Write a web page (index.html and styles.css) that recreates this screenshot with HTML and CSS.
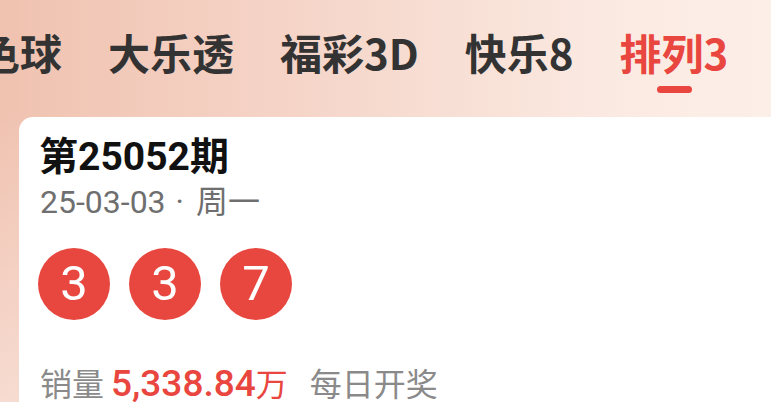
FILE: index.html
```html
<!DOCTYPE html>
<html lang="zh">
<head>
<meta charset="utf-8">
<link rel="stylesheet" href="styles.css">
</head>
<body>
<div class="page">
  <nav class="tabs">
    <div class="tab">双色球</div>
    <div class="tab">大乐透</div>
    <div class="tab">福彩3D</div>
    <div class="tab">快乐8</div>
    <div class="tab active">排列3</div>
  </nav>
  <section class="card">
    <h1 class="issue">第25052期</h1>
    <div class="date">25-03-03<span class="dot">·</span>周一</div>
    <div class="balls">
      <span class="ball">3</span>
      <span class="ball">3</span>
      <span class="ball">7</span>
    </div>
    <div class="sales">
      <span class="label">销量</span>
      <span class="amount">5,338.84<span class="unit">万</span></span>
      <span class="freq">每日开奖</span>
    </div>
  </section>
</div>
</body>
</html>
```
FILE: styles.css
```css
html, body {
  margin: 0;
  padding: 0;
}
body {
  width: 771px;
  height: 402px;
  overflow: hidden;
  font-family: "Noto Sans CJK SC", sans-serif;
}
.page {
  height: 402px;
  background: linear-gradient(90deg, #f0c2b0 0%, #f6d8cc 45%, #fbeae2 80%, #fcefe8 100%);
  position: relative;
  overflow: hidden;
}
.page::before {
  content: "";
  position: absolute;
  left: 0; right: 0; top: 110px; bottom: 0;
  background: linear-gradient(180deg, rgba(255,255,255,0) 0%, rgba(251,236,230,0.6) 100%);
}
.tabs {
  position: relative;
  display: flex;
  gap: 46px;
  margin-left: -64px;
  height: 117px;
  white-space: nowrap;
}
.tab {
  font-size: 42px;
  font-weight: 700;
  color: #333333;
  line-height: 42px;
  padding-top: 31px;
  position: relative;
}
.tab.active {
  color: #e8463e;
}
.tab.active::after {
  content: "";
  position: absolute;
  left: 50%;
  margin-left: -17px;
  top: 86px;
  width: 35px;
  height: 7px;
  border-radius: 4px;
  background: #e8463e;
}
.card {
  position: relative;
  margin-left: 19px;
  background: #ffffff;
  border-top-left-radius: 14px;
  height: 300px;
  padding: 17px 0 0 21px;
  box-sizing: border-box;
}
.issue {
  margin: 0 0 0 -1px;
  font-family: Roboto, "Noto Sans CJK SC", sans-serif;
  font-size: 39px;
  font-weight: 700;
  line-height: 46px;
  color: #111111;
}
.date {
  font-family: Roboto, "Noto Sans CJK SC", sans-serif;
  font-size: 32px;
  line-height: 40px;
  color: #6f6f6f;
  margin-top: 2px;
}
.dot {
  margin: 0 12px 0 10px;
}
.balls {
  display: flex;
  gap: 19px;
  margin-top: 26px;
  margin-left: -2px;
}
.ball {
  width: 72px;
  height: 72px;
  border-radius: 50%;
  background: #e8473f;
  color: #ffffff;
  font-family: Roboto, sans-serif;
  font-size: 49px;
  line-height: 72px;
  display: flex;
  align-items: center;
  justify-content: center;
}
.sales {
  margin-top: 42px;
  font-size: 32px;
  line-height: 40px;
  display: flex;
  align-items: baseline;
}
.label, .freq {
  color: #8a8a8a;
}
.amount {
  color: #e8463e;
  font-weight: 500;
  font-family: Roboto, sans-serif;
  font-size: 37px;
  margin-left: 7px;
  margin-right: 22px;
}
.unit {
  font-family: "Noto Sans CJK SC", sans-serif;
  font-size: 32px;
  font-weight: 400;
}
```
